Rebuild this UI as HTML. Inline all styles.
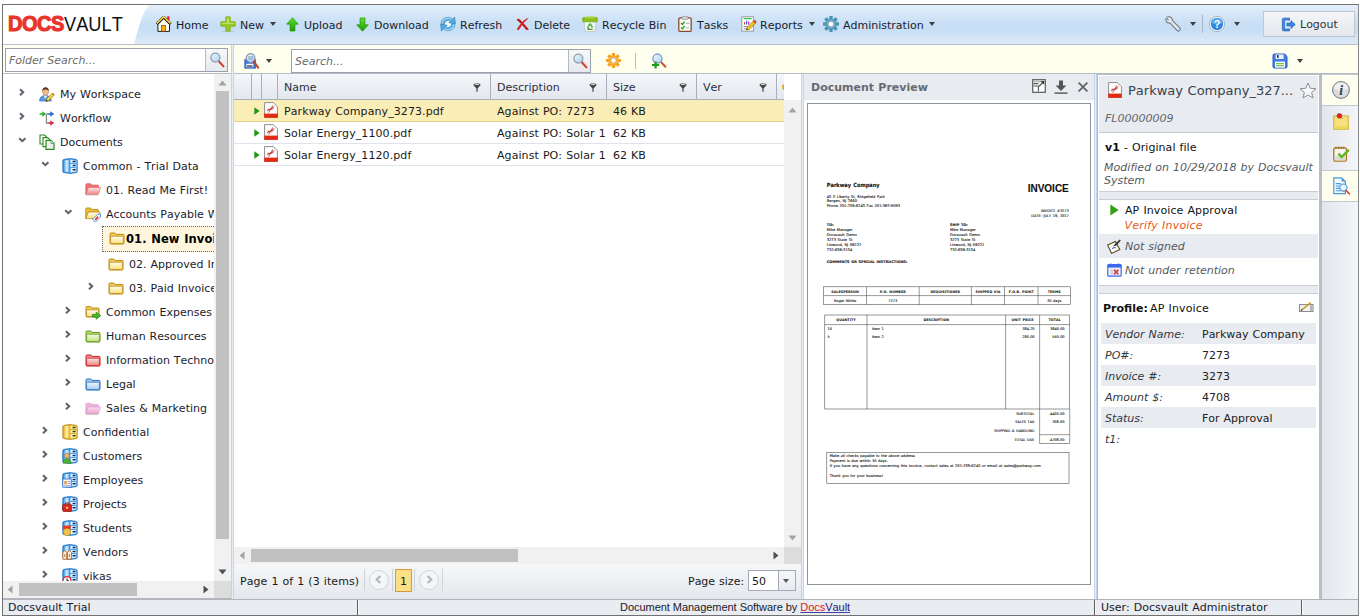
<!DOCTYPE html>
<html lang="en">
<head>
<meta charset="utf-8">
<title>Docsvault</title>
<style>
*{box-sizing:border-box;margin:0;padding:0}
html,body{width:1360px;height:616px;overflow:hidden;background:#fff}
body{font-family:"DejaVu Sans","Liberation Sans",sans-serif;font-size:11px;color:#1a1a1a;position:relative;word-spacing:0.45px;font-kerning:none}
.abs{position:absolute}
.t{position:absolute;white-space:nowrap;line-height:14px;height:14px;margin-top:1px}
svg{position:absolute;overflow:visible}
i,.it{font-style:italic}
#frame{position:absolute;left:2px;top:4px;width:1357px;height:612px;border:1px solid #707070;border-right-color:#8a8a8a}
/* toolbar */
#tb{position:absolute;left:3px;top:5px;width:1355px;height:39px;background:#fff;overflow:hidden}
#tbblue{position:absolute;left:0;top:0;width:1355px;height:39px}
#tbline{position:absolute;left:3px;top:44px;width:1355px;height:1px;background:#b9bec7}
.tbt{position:absolute;top:19px;line-height:14px;white-space:nowrap;color:#1c1c2c;font-size:11px}
.dd{position:absolute;width:0;height:0;margin-left:-0.2px;border-left:3.95px solid transparent;border-right:3.95px solid transparent;border-top:4.4px solid #404040}
/* search row */
#sr{position:absolute;left:3px;top:45px;width:1355px;height:29px;background:#fffff0;border-bottom:1px solid #b6bbc4}
.inp{position:absolute;background:#fff;border:1px solid #9aa1ac;height:24px}
.inp .ph{position:absolute;left:3px;top:5px;font-style:italic;color:#6b6b6b;line-height:14px;font-size:11px}
.inp .btn{position:absolute;right:0;top:0;width:22px;height:22px;border-left:1px solid #b4bac4;background:linear-gradient(#f7f8fa,#e6e9ee)}
/* tree */
#tree{position:absolute;left:3px;top:75px;width:211px;height:506px;background:#fff;overflow:hidden}
.tr{position:absolute;left:0;height:24px;line-height:24px;white-space:nowrap;font-size:11px;color:#1c1c2c}
.ex{position:absolute;width:7px;height:9px}
.gc{color:#2a2f3a}
.sb{font-size:11px;color:#1a1a2a}
.sbc{font-family:"Liberation Sans",sans-serif;letter-spacing:-0.04px;word-spacing:0}
</style>
</head>
<body>
<div id="frame"></div>

<!-- ===== top toolbar ===== -->
<div id="tb">
<svg id="tbblue" width="1355" height="39" viewBox="0 0 1355 39">
<defs><linearGradient id="gb" x1="0" y1="0" x2="0" y2="1"><stop offset="0" stop-color="#e4effb"/><stop offset="0.45" stop-color="#c9e0f6"/><stop offset="0.62" stop-color="#c6def5"/><stop offset="1" stop-color="#dceaf8"/></linearGradient></defs>
<path d="M131 39 C136 22 139 8 146 0 L1355 0 L1355 39 Z" fill="url(#gb)"/>
</svg>
</div>
<div id="tbline"></div>

<!-- logo -->
<div class="abs" style="left:8px;top:10px;height:28px;line-height:28px;white-space:nowrap;font-family:'Liberation Sans',sans-serif">
<span id="lg1" style="font-weight:bold;color:#e8342a;font-size:21.5px;letter-spacing:-0.5px;-webkit-text-stroke:1.1px #e8342a;display:inline-block;transform:scaleX(0.93);transform-origin:0 50%">DOCS</span></div>
<div class="abs" style="left:64px;top:10px;height:28px;line-height:28px;white-space:nowrap;font-family:'Liberation Sans',sans-serif">
<span id="lg2" style="color:#111;font-size:20.5px;display:inline-block;transform:scaleX(0.89);transform-origin:0 50%">VAULT</span></div>

<!-- toolbar labels -->
<span class="tbt" style="left:176px">Home</span>
<span class="tbt" style="left:240px">New</span><i class="dd" style="left:270px;top:22px"></i>
<span class="tbt" style="left:304px">Upload</span>
<span class="tbt" style="left:374px">Download</span>
<span class="tbt" style="left:460px">Refresh</span>
<span class="tbt" style="left:534px">Delete</span>
<span class="tbt" style="left:602px">Recycle Bin</span>
<span class="tbt" style="left:697px">Tasks</span>
<span class="tbt" style="left:760px">Reports</span><i class="dd" style="left:808.6px;top:22px;margin-left:0.6px"></i>
<span class="tbt" style="left:843px">Administration</span><i class="dd" style="left:929px;top:22px;margin-left:0.4px"></i>
<i class="dd" style="left:1190px;top:22px"></i>
<div class="abs" style="left:1202px;top:15px;width:1px;height:18px;background:#aab6c6"></div>
<i class="dd" style="left:1234px;top:22px"></i>
<div class="abs" style="left:1263px;top:11px;width:92px;height:26px;border:1px solid #c2c6cd;background:linear-gradient(#f4f6f9,#e3e7ed)"></div>
<span class="tbt" style="left:1300px;top:18px;color:#333">Logout</span>

<!-- ===== search row ===== -->
<div id="sr"></div>
<div class="inp" style="left:5px;top:48px;width:223px"><span class="ph">Folder Search...</span><span class="btn"></span></div>
<div class="inp" style="left:291px;top:49px;width:300px"><span class="ph">Search...</span><span class="btn"></span></div>
<i class="dd" style="left:266px;top:59px"></i>
<div class="abs" style="left:635px;top:53px;width:1px;height:16px;background:#b8bcc4"></div>
<i class="dd" style="left:1297px;top:59px"></i>

<!-- toolbar icons -->
<svg style="left:156px;top:16px;" width="16" height="16"><use href="#home"/></svg>
<svg style="left:220px;top:16px;" width="16" height="16"><use href="#plus"/></svg>
<svg style="left:285.5px;top:16.5px;" width="13" height="15"><use href="#upa"/></svg>
<svg style="left:355.5px;top:16.5px;" width="13" height="15"><use href="#dna"/></svg>
<svg style="left:440px;top:16px;" width="16" height="16"><use href="#refresh"/></svg>
<svg style="left:516px;top:17.5px;" width="13.5" height="12.5"><use href="#delx"/></svg>
<svg style="left:582px;top:16px;" width="16" height="16"><use href="#bin"/></svg>
<svg style="left:678px;top:16px;" width="14" height="16"><use href="#tasks"/></svg>
<svg style="left:741px;top:16px;" width="16" height="16"><use href="#reports"/></svg>
<svg style="left:823px;top:16px;fill:#4a94b6" width="16" height="16"><use href="#gear"/></svg>
<svg style="left:1165px;top:16px;" width="16" height="16"><use href="#wrench"/></svg>
<svg style="left:1209px;top:16px;" width="16" height="16"><use href="#help"/></svg>
<svg style="left:1280.5px;top:16.5px;" width="15" height="15"><use href="#logout"/></svg>
<svg style="left:209px;top:52px;" width="16" height="16"><use href="#mag"/></svg>
<svg style="left:572px;top:53px;" width="16" height="16"><use href="#mag"/></svg>
<svg style="left:244px;top:53px;" width="16" height="16"><use href="#magsave"/></svg>
<svg style="left:606px;top:53px;fill:#f5a31c" width="15" height="15"><use href="#gear"/></svg>
<svg style="left:651px;top:53px;" width="16" height="16"><use href="#magplus"/></svg>
<svg style="left:1272px;top:53px;" width="16" height="16"><use href="#floppy"/></svg>
<div id="tree">
<svg class="ex" style="left:15.5px;top:12.9px" width="8" height="9"><path d="M1 1.2 L4.2 4.2 L1 7.2" fill="none" stroke="#5b626c" stroke-width="2"/></svg>
<svg class="ic" style="left:36px;top:11px" width="16" height="16"><use href="#ws"/></svg>
<div class="tr" style="left:57px;top:8px">My Workspace</div>
<svg class="ex" style="left:15.5px;top:36.9px" width="8" height="9"><path d="M1 1.2 L4.2 4.2 L1 7.2" fill="none" stroke="#5b626c" stroke-width="2"/></svg>
<svg class="ic" style="left:36px;top:35px" width="16" height="16"><use href="#wf"/></svg>
<div class="tr" style="left:57px;top:32px">Workflow</div>
<svg class="ex" style="left:15.5px;top:60.9px" width="8" height="9"><path d="M0.2 2.2 L3.3 5.2 L6.4 2.2" fill="none" stroke="#5b626c" stroke-width="2"/></svg>
<svg class="ic" style="left:36px;top:59px" width="16" height="16"><use href="#docs"/></svg>
<div class="tr" style="left:57px;top:56px">Documents</div>
<svg class="ex" style="left:38.5px;top:84.9px" width="8" height="9"><path d="M0.2 2.2 L3.3 5.2 L6.4 2.2" fill="none" stroke="#5b626c" stroke-width="2"/></svg>
<svg class="ic" style="left:59px;top:83px" width="16" height="16"><use href="#cab"/></svg>
<div class="tr" style="left:80px;top:80px">Common - Trial Data</div>
<svg class="ic" style="left:82px;top:107px" width="16" height="16"><use href="#f_red_open" y="-0.5"/></svg>
<div class="tr" style="left:103px;top:104px">01. Read Me First!</div>
<svg class="ex" style="left:61.5px;top:132.9px" width="8" height="9"><path d="M0.2 2.2 L3.3 5.2 L6.4 2.2" fill="none" stroke="#5b626c" stroke-width="2"/></svg>
<svg class="ic" style="left:82px;top:131px" width="16" height="16"><use href="#f_tag"/></svg>
<div class="tr" style="left:103px;top:128px">Accounts Payable Workflow</div>
<div class="abs" style="left:99px;top:151px;width:140px;height:26px;border:1px dotted #6a6a6a;background:#fdf6dd"></div>
<svg class="ic" style="left:106px;top:155px" width="16" height="16"><use href="#f_yel"/></svg>
<div class="tr" style="left:123px;top:152px;font-weight:bold;font-size:11.5px;letter-spacing:0.1px;color:#000">01. New Invoices</div>
<svg class="ic" style="left:105px;top:181px" width="16" height="16"><use href="#f_yel"/></svg>
<div class="tr" style="left:126px;top:178px">02. Approved Invoices</div>
<svg class="ex" style="left:84.5px;top:206.9px" width="8" height="9"><path d="M1 1.2 L4.2 4.2 L1 7.2" fill="none" stroke="#5b626c" stroke-width="2"/></svg>
<svg class="ic" style="left:105px;top:205px" width="16" height="16"><use href="#f_yel"/></svg>
<div class="tr" style="left:126px;top:202px">03. Paid Invoices</div>
<svg class="ex" style="left:61.5px;top:230.9px" width="8" height="9"><path d="M1 1.2 L4.2 4.2 L1 7.2" fill="none" stroke="#5b626c" stroke-width="2"/></svg>
<svg class="ic" style="left:82px;top:229px" width="16" height="16"><use href="#f_arrow"/></svg>
<div class="tr" style="left:103px;top:226px">Common Expenses</div>
<svg class="ex" style="left:61.5px;top:254.9px" width="8" height="9"><path d="M1 1.2 L4.2 4.2 L1 7.2" fill="none" stroke="#5b626c" stroke-width="2"/></svg>
<svg class="ic" style="left:82px;top:253px" width="16" height="16"><use href="#f_green"/></svg>
<div class="tr" style="left:103px;top:250px">Human Resources</div>
<svg class="ex" style="left:61.5px;top:278.9px" width="8" height="9"><path d="M1 1.2 L4.2 4.2 L1 7.2" fill="none" stroke="#5b626c" stroke-width="2"/></svg>
<svg class="ic" style="left:82px;top:277px" width="16" height="16"><use href="#f_red"/></svg>
<div class="tr" style="left:103px;top:274px">Information Technology</div>
<svg class="ex" style="left:61.5px;top:302.9px" width="8" height="9"><path d="M1 1.2 L4.2 4.2 L1 7.2" fill="none" stroke="#5b626c" stroke-width="2"/></svg>
<svg class="ic" style="left:82px;top:301px" width="16" height="16"><use href="#f_blue"/></svg>
<div class="tr" style="left:103px;top:298px">Legal</div>
<svg class="ex" style="left:61.5px;top:326.9px" width="8" height="9"><path d="M1 1.2 L4.2 4.2 L1 7.2" fill="none" stroke="#5b626c" stroke-width="2"/></svg>
<svg class="ic" style="left:82px;top:325px" width="16" height="16"><use href="#f_pink"/></svg>
<div class="tr" style="left:103px;top:322px">Sales &amp; Marketing</div>
<svg class="ex" style="left:38.5px;top:350.9px" width="8" height="9"><path d="M1 1.2 L4.2 4.2 L1 7.2" fill="none" stroke="#5b626c" stroke-width="2"/></svg>
<svg class="ic" style="left:59px;top:349px" width="16" height="16"><use href="#cab_y"/></svg>
<div class="tr" style="left:80px;top:346px">Confidential</div>
<svg class="ex" style="left:38.5px;top:374.9px" width="8" height="9"><path d="M1 1.2 L4.2 4.2 L1 7.2" fill="none" stroke="#5b626c" stroke-width="2"/></svg>
<svg class="ic" style="left:59px;top:373px" width="16" height="16"><use href="#cab_cust"/></svg>
<div class="tr" style="left:80px;top:370px">Customers</div>
<svg class="ex" style="left:38.5px;top:398.9px" width="8" height="9"><path d="M1 1.2 L4.2 4.2 L1 7.2" fill="none" stroke="#5b626c" stroke-width="2"/></svg>
<svg class="ic" style="left:59px;top:397px" width="16" height="16"><use href="#cab_emp"/></svg>
<div class="tr" style="left:80px;top:394px">Employees</div>
<svg class="ex" style="left:38.5px;top:422.9px" width="8" height="9"><path d="M1 1.2 L4.2 4.2 L1 7.2" fill="none" stroke="#5b626c" stroke-width="2"/></svg>
<svg class="ic" style="left:59px;top:421px" width="16" height="16"><use href="#cab_proj"/></svg>
<div class="tr" style="left:80px;top:418px">Projects</div>
<svg class="ex" style="left:38.5px;top:446.9px" width="8" height="9"><path d="M1 1.2 L4.2 4.2 L1 7.2" fill="none" stroke="#5b626c" stroke-width="2"/></svg>
<svg class="ic" style="left:59px;top:445px" width="16" height="16"><use href="#cab_stu"/></svg>
<div class="tr" style="left:80px;top:442px">Students</div>
<svg class="ex" style="left:38.5px;top:470.9px" width="8" height="9"><path d="M1 1.2 L4.2 4.2 L1 7.2" fill="none" stroke="#5b626c" stroke-width="2"/></svg>
<svg class="ic" style="left:59px;top:469px" width="16" height="16"><use href="#cab_ven"/></svg>
<div class="tr" style="left:80px;top:466px">Vendors</div>
<svg class="ex" style="left:38.5px;top:494.9px" width="8" height="9"><path d="M1 1.2 L4.2 4.2 L1 7.2" fill="none" stroke="#5b626c" stroke-width="2"/></svg>
<svg class="ic" style="left:59px;top:493px" width="16" height="16"><use href="#cab_vik"/></svg>
<div class="tr" style="left:80px;top:490px">vikas</div>
</div>
<div class="abs" style="left:214px;top:74px;width:17px;height:507px;background:#f1f1f1"></div>
<div class="abs" style="left:216px;top:91px;width:13px;height:448px;background:#c1c1c1"></div>
<svg style="left:218px;top:80px" width="9" height="6"><path d="M0.5 5.5 L4.5 0.5 L8.5 5.5 Z" fill="#a3a3a3"/></svg>
<svg style="left:218px;top:569px" width="9" height="6"><path d="M0.5 0.5 L4.5 5.5 L8.5 0.5 Z" fill="#505050"/></svg>
<div class="abs" style="left:3px;top:581px;width:228px;height:17px;background:#f1f1f1"></div>
<div class="abs" style="left:214px;top:581px;width:17px;height:17px;background:#dcdcdc"></div>
<div class="abs" style="left:19px;top:583px;width:118px;height:13px;background:#c1c1c1"></div>
<svg style="left:7px;top:585px" width="6" height="9"><path d="M5.5 0.5 L0.5 4.5 L5.5 8.5 Z" fill="#a3a3a3"/></svg>
<svg style="left:203px;top:585px" width="6" height="9"><path d="M0.5 0.5 L5.5 4.5 L0.5 8.5 Z" fill="#505050"/></svg>
<div class="abs" style="left:231px;top:45px;width:3px;height:554px;background:#e6eef8;border-left:1px solid #c3d3ea;border-right:1px solid #c3d3ea"></div>
<!--TREE-END-->
<!-- ===== grid ===== -->
<div class="abs" style="left:234px;top:74px;width:567px;height:525px;background:#fff"></div>
<div id="gh" class="abs" style="left:234px;top:74px;width:550px;height:26px;background:linear-gradient(#f4f6f9,#e3e7ee);border-bottom:1px solid #a9afb9;overflow:hidden">
<div class="abs" style="left:17px;top:0;width:1px;height:25px;background:#a9afb9"></div>
<div class="abs" style="left:27px;top:0;width:1px;height:25px;background:#a9afb9"></div>
<div class="abs" style="left:43px;top:0;width:1px;height:25px;background:#a9afb9"></div>
<div class="abs" style="left:256px;top:0;width:1px;height:25px;background:#a9afb9"></div>
<div class="abs" style="left:372px;top:0;width:1px;height:25px;background:#a9afb9"></div>
<div class="abs" style="left:462px;top:0;width:1px;height:25px;background:#a9afb9"></div>
<div class="abs" style="left:542px;top:0;width:1px;height:25px;background:#a9afb9"></div>
<span class="t gc" style="left:50px;top:6px">Name</span>
<span class="t gc" style="left:263px;top:6px">Description</span>
<span class="t gc" style="left:379px;top:6px">Size</span>
<span class="t gc" style="left:469px;top:6px">Ver</span>
<svg style="left:239px;top:9px" width="8" height="9"><use href="#filt"/></svg>
<svg style="left:355px;top:9px" width="8" height="9"><use href="#filt"/></svg>
<svg style="left:445px;top:9px" width="8" height="9"><use href="#filt"/></svg>
<svg style="left:525px;top:9px" width="8" height="9"><use href="#filt"/></svg>
<div class="abs" style="left:548px;top:10px;width:3px;height:6px;background:#f0a020;border-radius:3px 0 0 3px"></div>
</div>
<div class="abs" style="left:234px;top:100px;width:550px;height:22px;background:#fbedb6;border-bottom:1px solid #e6cf86"></div>
<div class="abs" style="left:234px;top:122px;width:550px;height:22px;border-bottom:1px solid #dfe3ea"></div>
<div class="abs" style="left:234px;top:144px;width:550px;height:22px;border-bottom:1px solid #dfe3ea"></div>
<svg style="left:254px;top:107px" width="6" height="8"><use href="#play"/></svg>
<svg style="left:264px;top:102px" width="14" height="16"><use href="#pdf"/></svg>
<span class="t" style="left:284px;top:104px;letter-spacing:0.09px">Parkway Company_3273.pdf</span>
<span class="t" style="left:497px;top:104px;width:110px;overflow:hidden;letter-spacing:0.08px">Against PO: 7273</span>
<span class="t" style="left:613px;top:104px">46 KB</span>
<svg style="left:254px;top:129px" width="6" height="8"><use href="#play"/></svg>
<svg style="left:264px;top:124px" width="14" height="16"><use href="#pdf"/></svg>
<span class="t" style="left:284px;top:126px;letter-spacing:0.09px">Solar Energy_1100.pdf</span>
<span class="t" style="left:497px;top:126px;width:110px;overflow:hidden;letter-spacing:0.08px">Against PO: Solar 1</span>
<span class="t" style="left:613px;top:126px">62 KB</span>
<svg style="left:254px;top:151px" width="6" height="8"><use href="#play"/></svg>
<svg style="left:264px;top:146px" width="14" height="16"><use href="#pdf"/></svg>
<span class="t" style="left:284px;top:148px;letter-spacing:0.09px">Solar Energy_1120.pdf</span>
<span class="t" style="left:497px;top:148px;width:110px;overflow:hidden;letter-spacing:0.08px">Against PO: Solar 1</span>
<span class="t" style="left:613px;top:148px">62 KB</span>
<div class="abs" style="left:784px;top:100px;width:17px;height:447px;background:#f1f1f1"></div>
<svg style="left:788px;top:107px" width="9" height="6"><path d="M0.5 5.5 L4.5 0.5 L8.5 5.5 Z" fill="#a3a3a3"/></svg>
<svg style="left:788px;top:535px" width="9" height="6"><path d="M0.5 0.5 L4.5 5.5 L8.5 0.5 Z" fill="#a3a3a3"/></svg>
<div class="abs" style="left:234px;top:547px;width:567px;height:17px;background:#f1f1f1"></div>
<div class="abs" style="left:784px;top:547px;width:17px;height:17px;background:#dcdcdc"></div>
<div class="abs" style="left:251px;top:549px;width:267px;height:13px;background:#c1c1c1"></div>
<svg style="left:239px;top:551px" width="6" height="9"><path d="M5.5 0.5 L0.5 4.5 L5.5 8.5 Z" fill="#a3a3a3"/></svg>
<svg style="left:773px;top:551px" width="6" height="9"><path d="M0.5 0.5 L5.5 4.5 L0.5 8.5 Z" fill="#505050"/></svg>
<div class="abs" style="left:234px;top:564px;width:567px;height:35px;background:linear-gradient(#f6f7f9,#e4e7ec)"></div>
<span class="t" style="left:240px;top:574px;letter-spacing:0.07px">Page 1 of 1 (3 items)</span>
<div class="abs" style="left:364px;top:569px;width:1px;height:22px;background:#cfd3d9"></div>
<div class="abs" style="left:392px;top:569px;width:1px;height:22px;background:#cfd3d9"></div>
<div class="abs" style="left:414px;top:569px;width:1px;height:22px;background:#cfd3d9"></div>
<div class="abs" style="left:442px;top:569px;width:1px;height:22px;background:#cfd3d9"></div>
<div class="abs" style="left:369px;top:570px;width:20px;height:20px;border:1px solid #d2d5da;border-radius:10px;background:#f4f5f7"></div>
<svg style="left:375px;top:575px" width="7" height="9"><path d="M5.4 1 L1.6 4.5 L5.4 8" fill="none" stroke="#b0b3b8" stroke-width="2"/></svg>
<div class="abs" style="left:419px;top:570px;width:20px;height:20px;border:1px solid #d2d5da;border-radius:10px;background:#f4f5f7"></div>
<svg style="left:426px;top:575px" width="7" height="9"><path d="M1.6 1 L5.4 4.5 L1.6 8" fill="none" stroke="#b0b3b8" stroke-width="2"/></svg>
<div class="abs" style="left:395px;top:569px;width:17px;height:23px;border:1px solid #d89a3c;background:#fbdf85"></div>
<span class="t" style="left:400px;top:574px">1</span>
<span class="t" style="left:688px;top:574px">Page size:</span>
<div class="abs" style="left:748px;top:570px;width:48px;height:21px;border:1px solid #a4aab4;background:#fff"></div>
<div class="abs" style="left:778px;top:571px;width:17px;height:19px;border-left:1px solid #a4aab4;background:linear-gradient(#f6f7f9,#e8ebef)"></div>
<i class="dd" style="left:783px;top:579px;border-top-color:#555"></i>
<span class="t" style="left:752px;top:574px">50</span>
<div class="abs" style="left:801px;top:74px;width:3px;height:525px;background:#e6eef8;border-left:1px solid #c3d3ea;border-right:1px solid #c3d3ea"></div>
<!--GRID-END-->
<!-- ===== preview ===== -->
<div class="abs" style="left:804px;top:74px;width:290px;height:525px;background:#fff"></div>
<div class="abs" style="left:804px;top:74px;width:290px;height:26px;background:#e8ebf0"></div>
<span class="t" style="left:811px;top:80px;font-weight:bold;color:#666a70">Document Preview</span>
<svg style="left:1032px;top:79px" width="14" height="14"><use href="#popout"/></svg>
<svg style="left:1054px;top:80px" width="14" height="14"><use href="#dl"/></svg>
<svg style="left:1078px;top:82px" width="10" height="10"><use href="#cls"/></svg>
<div class="abs" style="left:807px;top:103px;width:284px;height:482px;border:1px solid #8d929b;background:#fff"></div>
<svg id="inv" style="left:807px;top:103px" width="284" height="482" viewBox="807 103 284 482" font-family="DejaVu Sans, Liberation Sans, sans-serif" fill="#222">
<g font-size="3.6" stroke="#222" stroke-width="0.12">
<text x="826.8" y="187" font-size="5.6" font-weight="bold" fill="#111" font-family="DejaVu Sans Condensed, DejaVu Sans, sans-serif">Parkway Company</text>
<text x="1068.8" y="191.6" font-size="10" font-weight="bold" text-anchor="end" fill="#111" font-family="Liberation Sans, sans-serif">INVOICE</text>
<text x="826.8" y="197.6">45 E Liberty St, Ridgefield Park</text>
<text x="826.8" y="202.4">Bergen, NJ 7660</text>
<text x="826.8" y="207.4">Phone 201-709-6245  Fax 201-387-9093</text>
<text x="1068.8" y="212" text-anchor="end" font-size="3.5">INVOICE #3273</text>
<text x="1068.8" y="217" text-anchor="end" font-size="3.5">DATE: JULY 19, 2017</text>
<text x="826.8" y="226.3" font-weight="bold" font-size="3.5">TO:</text>
<text x="826.8" y="231.3">Mike Manager</text>
<text x="826.8" y="236">Docsvault Demo</text>
<text x="826.8" y="241">3273 State St</text>
<text x="826.8" y="245.7">Linwood, NJ 08221</text>
<text x="826.8" y="250.6">732-658-3154</text>
<text x="949.9" y="226.3" font-weight="bold" font-size="3.5">SHIP TO:</text>
<text x="949.9" y="231.3">Mike Manager</text>
<text x="949.9" y="236">Docsvault Demo</text>
<text x="949.9" y="241">3273 State St</text>
<text x="949.9" y="245.7">Linwood, NJ 08221</text>
<text x="949.9" y="250.6">732-658-3154</text>
<text x="826.8" y="263.3" font-weight="bold" font-size="3.5">COMMENTS OR SPECIAL INSTRUCTIONS:</text>
</g>
<g fill="none" stroke="#444" stroke-width="0.55">
<rect x="823.5" y="286.8" width="247" height="17.9"/>
<path d="M823.5 295.6 H1070.5 M866.5 286.8 V304.7 M919.2 286.8 V304.7 M971.4 286.8 V304.7 M1004.5 286.8 V304.7 M1038 286.8 V304.7"/>
<rect x="824.8" y="315" width="244.9" height="94"/>
<path d="M824.8 324.6 H1069.7 M867 315 V409 M1005.6 315 V409 M1039.6 315 V443.5 M1069.7 409 V443.5 M1039.6 434.7 H1069.7 M1039.6 443.5 H1069.7"/>
<rect x="826.8" y="452.4" width="242.2" height="31"/>
</g>
<g font-size="3.4" font-weight="bold" text-anchor="middle" fill="#111">
<text x="845" y="292.6">SALESPERSON</text><text x="892.8" y="292.6">P.O. NUMBER</text><text x="945.3" y="292.6">REQUISITIONER</text><text x="988" y="292.6">SHIPPED VIA</text><text x="1021.2" y="292.6">F.O.B. POINT</text><text x="1054.2" y="292.6">TERMS</text>
<text x="846" y="321.2">QUANTITY</text><text x="936.3" y="321.2">DESCRIPTION</text><text x="1022.6" y="321.2">UNIT PRICE</text><text x="1054.6" y="321.2">TOTAL</text>
</g>
<g font-size="3.5" stroke="#222" stroke-width="0.12">
<text x="845" y="301.6" text-anchor="middle">Roger White</text><text x="892.8" y="301.6" text-anchor="middle">7273</text><text x="1054.2" y="301.6" text-anchor="middle">30 days</text>
<text x="827.6" y="329.6">10</text><text x="872" y="329.6">Item 1</text><text x="1034.6" y="329.6" text-anchor="end">384.20</text><text x="1064.6" y="329.6" text-anchor="end">3840.00</text>
<text x="827.6" y="337.8">5</text><text x="872" y="337.8">Item 2</text><text x="1034.6" y="337.8" text-anchor="end">280.00</text><text x="1064.6" y="337.8" text-anchor="end">560.00</text>
<text x="1034.4" y="414.8" text-anchor="end" font-size="3.45">SUBTOTAL</text><text x="1064.4" y="414.8" text-anchor="end">4400.00</text>
<text x="1034.4" y="423.2" text-anchor="end" font-size="3.45">SALES TAX</text><text x="1064.4" y="423.2" text-anchor="end">308.00</text>
<text x="1034.4" y="431.9" text-anchor="end" font-size="3.45">SHIPPING &amp; HANDLING</text>
<text x="1034.4" y="440.7" text-anchor="end" font-size="3.45">TOTAL DUE</text><text x="1064.4" y="440.7" text-anchor="end">4708.00</text>
<text x="829.7" y="456.7" font-size="3.56">Make all checks payable to the above address</text>
<text x="829.7" y="461.6" font-size="3.56">Payment is due within 30 days.</text>
<text x="829.7" y="466.7" font-size="3.59">If you have any questions concerning this invoice, contact sales at 201-709-6245 or email at sales@parkway.com</text>
<text x="829.7" y="477.1" font-size="3.56">Thank you for your business!</text>
</g>
</svg>
<div class="abs" style="left:1094px;top:74px;width:3px;height:525px;background:#e6eef8;border-left:1px solid #c3d3ea;border-right:1px solid #c3d3ea"></div>
<!--PREVIEW-END-->
<!-- ===== right panel ===== -->
<div class="abs" style="left:1097px;top:74px;width:223px;height:525px;background:#fff;border-left:1px solid #b4b9c2;border-top:1px solid #b4b9c2"></div>
<div class="abs" style="left:1099px;top:76px;width:219px;height:57px;background:#e8ebf0;border-bottom:1px solid #c6cad1"></div>
<svg style="left:1108px;top:82px" width="14" height="16"><use href="#pdf"/></svg>
<span class="t" id="ttl" style="left:1128px;top:80px;font-size:13px;line-height:20px;height:20px;color:#35424f">Parkway Company_327...</span>
<svg style="left:1299px;top:81.5px" width="18" height="17"><use href="#star"/></svg>
<span class="t it" style="left:1105px;top:111px;color:#63676e">FL00000009</span>
<span class="t" style="left:1105px;top:140px;color:#111;letter-spacing:0.06px"><b>v1</b> - Original file</span>
<span class="t it" style="left:1104px;top:160px;color:#555a62;font-size:11px;letter-spacing:0.03px">Modified on 10/29/2018 by Docsvault</span>
<span class="t it" style="left:1104px;top:173px;color:#555a62;font-size:11px">System</span>
<div class="abs" style="left:1099px;top:191px;width:219px;height:9px;background:#e8ebf0;border-top:1px solid #c9cdd3;border-bottom:1px solid #c9cdd3"></div>
<svg style="left:1110px;top:204px" width="9" height="12" viewBox="0 0 9 12"><path d="M0.4 0.4 L8.6 6 L0.4 11.6 Z" fill="#2fa012"/></svg>
<span class="t" style="left:1125px;top:203px;color:#111;letter-spacing:0.1px">AP Invoice Approval</span>
<span class="t it" style="left:1124.5px;top:218px;color:#e8581a;letter-spacing:0.2px">Verify Invoice</span>
<div class="abs" style="left:1099px;top:234px;width:219px;height:24px;background:#e8ebf0"></div>
<svg style="left:1107px;top:239px" width="15" height="15"><use href="#sign"/></svg>
<span class="t it" style="left:1125px;top:239px;color:#555a62">Not signed</span>
<svg style="left:1107px;top:263px" width="15" height="14"><use href="#cal"/></svg>
<span class="t it" style="left:1125px;top:263px;color:#555a62">Not under retention</span>
<div class="abs" style="left:1099px;top:285px;width:219px;height:9px;background:#e8ebf0;border-top:1px solid #c9cdd3;border-bottom:1px solid #c9cdd3"></div>
<span class="t" style="left:1103px;top:301px;color:#111"><b>Profile:</b></span><span class="t" style="left:1150px;top:301px;color:#111;letter-spacing:0.15px">AP Invoice</span>
<svg style="left:1299px;top:302px" width="15" height="10"><use href="#edit"/></svg>
<div class="abs" style="left:1101px;top:323px;width:215px;height:21px;background:#e8ebf0"></div>
<span class="t it" style="left:1105px;top:327px;color:#333840">Vendor Name:</span><span class="t" style="left:1202px;top:327px;color:#222">Parkway Company</span>
<span class="t it" style="left:1105px;top:348px;color:#333840">PO#:</span><span class="t" style="left:1202px;top:348px;color:#222">7273</span>
<div class="abs" style="left:1101px;top:365px;width:215px;height:21px;background:#e8ebf0"></div>
<span class="t it" style="left:1105px;top:369px;color:#333840">Invoice #:</span><span class="t" style="left:1202px;top:369px;color:#222">3273</span>
<span class="t it" style="left:1105px;top:390px;color:#333840">Amount $:</span><span class="t" style="left:1202px;top:390px;color:#222">4708</span>
<div class="abs" style="left:1101px;top:407px;width:215px;height:21px;background:#e8ebf0"></div>
<span class="t it" style="left:1105px;top:411px;color:#333840">Status:</span><span class="t" style="left:1202px;top:411px;color:#222">For Approval</span>
<span class="t it" style="left:1105px;top:432px;color:#333840">t1:</span><span class="t" style="left:1202px;top:432px;color:#222"></span>
<!-- tab strip -->
<div class="abs" style="left:1319px;top:74px;width:3px;height:525px;background:#b9bdc5"></div>
<div class="abs" style="left:1322px;top:74px;width:36px;height:525px;background:linear-gradient(90deg,#e3e6ec,#f3f5f8);border-top:1px solid #c3c8d0"></div>
<div class="abs" style="left:1322px;top:75px;width:36px;height:31px;background:#fffff0;border-bottom:1px solid #c3c8d0"></div>
<div class="abs" style="left:1322px;top:170px;width:36px;height:32px;background:#fffff0;border-top:1px solid #c3c8d0;border-bottom:1px solid #c3c8d0"></div>
<svg style="left:1332px;top:81px" width="18" height="18"><use href="#info"/></svg>
<svg style="left:1333px;top:113px" width="16" height="17"><use href="#sticky"/></svg>
<svg style="left:1333px;top:146px" width="17" height="16"><use href="#tcheck"/></svg>
<svg style="left:1333px;top:177px" width="17" height="18"><use href="#docprev"/></svg>
<!--RIGHT-END-->
<!-- ===== status bar ===== -->
<div class="abs" style="left:3px;top:599px;width:1355px;height:16px;background:#e9ecf1;border-top:1px solid #b0b3b9"></div>
<div class="abs" style="left:3px;top:598px;width:228px;height:1px;background:#b4b7bd"></div>
<div class="abs" style="left:357px;top:600px;width:2px;height:15px;background:#f7f8fa;border-left:1px solid #5f5f5f"></div>
<div class="abs" style="left:1094px;top:600px;width:2px;height:15px;background:#f7f8fa;border-left:1px solid #5f5f5f"></div>
<div class="abs" style="left:1301px;top:600px;width:2px;height:15px;background:#f7f8fa;border-left:1px solid #5f5f5f"></div>
<span class="t sb" style="left:8px;top:600px">Docsvault Trial</span>
<span class="t sb sbc" style="left:620px;top:599px">Document Management Software by <span style="text-decoration:underline;text-decoration-color:#4a3aa0"><span style="color:#e02020">Docs</span><span style="color:#2a1a80">Vault</span></span></span>
<span class="t sb" style="left:1101px;top:600px">User: Docsvault Administrator</span>
<!--STATUS-END-->
<!--ICONS-START-->
<svg width="0" height="0" style="left:0;top:0">
<defs>
<linearGradient id="gY" x1="0" y1="0" x2="0" y2="1"><stop offset="0" stop-color="#fffdf0"/><stop offset="1" stop-color="#f9df7e"/></linearGradient>
<linearGradient id="gG" x1="0" y1="0" x2="0" y2="1"><stop offset="0" stop-color="#f6fbe6"/><stop offset="1" stop-color="#bfe07c"/></linearGradient>
<linearGradient id="gR" x1="0" y1="0" x2="0" y2="1"><stop offset="0" stop-color="#fde6e6"/><stop offset="1" stop-color="#f08080"/></linearGradient>
<linearGradient id="gBl" x1="0" y1="0" x2="0" y2="1"><stop offset="0" stop-color="#f2f8fe"/><stop offset="1" stop-color="#a6ccf2"/></linearGradient>
<linearGradient id="gP" x1="0" y1="0" x2="0" y2="1"><stop offset="0" stop-color="#f9dcee"/><stop offset="1" stop-color="#e9a3d0"/></linearGradient>
<linearGradient id="gCabL" x1="0" y1="0" x2="1" y2="0"><stop offset="0" stop-color="#3f9bea"/><stop offset="0.55" stop-color="#d6effe"/><stop offset="1" stop-color="#62b4f2"/></linearGradient>
<linearGradient id="gCabYL" x1="0" y1="0" x2="1" y2="0"><stop offset="0" stop-color="#eab42a"/><stop offset="0.55" stop-color="#fff3a8"/><stop offset="1" stop-color="#f0c43c"/></linearGradient>
<linearGradient id="gCab" x1="0" y1="0" x2="1" y2="0"><stop offset="0" stop-color="#2f8fe0"/><stop offset="0.5" stop-color="#bfe3fb"/><stop offset="1" stop-color="#3a98e4"/></linearGradient>
<linearGradient id="gCabY" x1="0" y1="0" x2="1" y2="0"><stop offset="0" stop-color="#e0a81a"/><stop offset="0.5" stop-color="#fde97c"/><stop offset="1" stop-color="#e4b022"/></linearGradient>
<linearGradient id="gGrn" x1="0" y1="0" x2="0" y2="1"><stop offset="0" stop-color="#5fe02a"/><stop offset="1" stop-color="#1f9a08"/></linearGradient>
<linearGradient id="gLens" x1="0" y1="0" x2="1" y2="1"><stop offset="0" stop-color="#f2f9ff"/><stop offset="1" stop-color="#a9cdee"/></linearGradient>

<!-- folders (16x16, drawn within y 2..14) -->
<symbol id="f_yel" viewBox="0 0 16 16"><path d="M1 4 Q1 3 2 3 H5.8 L7 4.4 H14 Q15 4.4 15 5.4 V13 Q15 14 14 14 H2 Q1 14 1 13 Z" fill="#f0cc5c" stroke="#bd8a14" stroke-width="1"/><rect x="1.6" y="6.2" width="12.8" height="7.4" rx="0.9" fill="url(#gY)" stroke="#bd8a14" stroke-width="0.8"/></symbol>
<symbol id="f_green" viewBox="0 0 16 16"><path d="M1 4 Q1 3 2 3 H5.8 L7 4.4 H14 Q15 4.4 15 5.4 V13 Q15 14 14 14 H2 Q1 14 1 13 Z" fill="#b4d870" stroke="#669a1e" stroke-width="1"/><rect x="1.6" y="6.2" width="12.8" height="7.4" rx="0.9" fill="url(#gG)" stroke="#669a1e" stroke-width="0.8"/></symbol>
<symbol id="f_red" viewBox="0 0 16 16"><path d="M1 4 Q1 3 2 3 H5.8 L7 4.4 H14 Q15 4.4 15 5.4 V13 Q15 14 14 14 H2 Q1 14 1 13 Z" fill="#f09090" stroke="#cc2424" stroke-width="1"/><rect x="1.6" y="6.2" width="12.8" height="7.4" rx="0.9" fill="url(#gR)" stroke="#cc2424" stroke-width="0.8"/></symbol>
<symbol id="f_blue" viewBox="0 0 16 16"><path d="M1 4 Q1 3 2 3 H5.8 L7 4.4 H14 Q15 4.4 15 5.4 V13 Q15 14 14 14 H2 Q1 14 1 13 Z" fill="#a8ccf0" stroke="#2c6ec4" stroke-width="1"/><rect x="1.6" y="6.2" width="12.8" height="7.4" rx="0.9" fill="url(#gBl)" stroke="#2c6ec4" stroke-width="0.8"/></symbol>
<symbol id="f_pink" viewBox="0 0 16 16"><path d="M0.8 4.4 Q0.8 3.2 2 3.2 H5.6 L6.8 4.6 H12.6 Q13.6 4.6 13.6 5.6 V7.2 H3.4 L0.8 13.6 Z" fill="#eeb4dc" stroke="#dc9ccc" stroke-width=".7"/><path d="M3.6 7 H15.8 L13.2 14 H0.8 Z" fill="url(#gP)" stroke="#de9ccc" stroke-width=".6"/><path d="M1 14.6 H13.2" stroke="#b8b8b8" stroke-width=".6"/></symbol>
<symbol id="f_red_open" viewBox="0 0 16 16"><path d="M0.8 3.4 Q0.8 2.2 2 2.2 H5.6 L6.8 3.6 H12.6 Q13.6 3.6 13.6 4.6 V6.2 H3.4 L0.8 12.6 Z" fill="#ee7272" stroke="#e05a5a" stroke-width=".7"/><path d="M3.6 6 H15.8 L13.2 13 H0.8 Z" fill="url(#gR)" stroke="#e46868" stroke-width=".6"/><path d="M1 13.6 H13.2" stroke="#b0b0b0" stroke-width=".6"/></symbol>
<symbol id="f_tag" viewBox="0 0 16 16"><path d="M0.8 3.2 Q0.8 2 2 2 H5.4 L6.6 3.4 H12.4 Q13.4 3.4 13.4 4.4 V6 H3.6 L0.8 12.6 Z" fill="#ecc040" stroke="#b8860e" stroke-width=".9"/><path d="M3.4 6 H15.2 L12.6 12.6 H0.8 Z" fill="url(#gY)" stroke="#c4921c" stroke-width=".8"/><path d="M7.6 13.4 L12.4 8.4 L15.6 8 L15.4 11.2 L10.6 16 Z" fill="#fff" stroke="#4a8ad8" stroke-width="0.9"/><path d="M9.6 13.2 L12.6 10 L13.8 11.2 L10.8 14.4 Z" fill="#e53030"/></symbol>
<symbol id="f_arrow" viewBox="0 0 16 16"><path d="M1 3.6 Q1 2.6 2 2.6 H5.8 L7 4 H13 Q14 4 14 5 V12 Q14 13 13 13 H2 Q1 13 1 12 Z" fill="#f0cc5c" stroke="#bd8a14" stroke-width="1"/><rect x="1.6" y="5.8" width="11.8" height="6.8" rx="0.9" fill="url(#gY)" stroke="#bd8a14" stroke-width="0.8"/><path d="M7.4 10.4 H11.2 V8.2 L15.8 11.7 L11.2 15.2 V13 H7.4 Z" fill="#44b82e" stroke="#1e7f12" stroke-width="0.7"/></symbol>

<!-- cabinets -->
<symbol id="cab" viewBox="0 0 16 16"><path d="M0.8 2.6 Q0.8 1.6 1.8 1.4 L7.6 0.6 H8.4 L14.2 1.4 Q15.2 1.6 15.2 2.6 V13.4 Q15.2 14.4 14.2 14.6 L8.4 15.4 H7.6 L1.8 14.6 Q0.8 14.4 0.8 13.4 Z" fill="#2b86dc" stroke="#1f72c8" stroke-width=".8"/><path d="M1.6 2.6 L7.4 1.6 V14.4 L1.6 13.4 Z" fill="url(#gCabL)"/><path d="M8.4 1.6 L14.4 2.6 V13.4 L8.4 14.4 Z" fill="#eaf6fe"/><path d="M8.4 5.6 Q11 4.6 14.4 5.8 M8.4 9.8 Q11 8.8 14.4 10" fill="none" stroke="#2f8fe4" stroke-width="1"/><path d="M10.6 3.4 h3 M10.6 7.6 h3 M10.6 11.8 h3" stroke="#0c2a66" stroke-width="1.5"/></symbol>
<symbol id="cab_y" viewBox="0 0 16 16"><path d="M0.8 2.6 Q0.8 1.6 1.8 1.4 L7.6 0.6 H8.4 L14.2 1.4 Q15.2 1.6 15.2 2.6 V13.4 Q15.2 14.4 14.2 14.6 L8.4 15.4 H7.6 L1.8 14.6 Q0.8 14.4 0.8 13.4 Z" fill="#e0a81c" stroke="#b8840e" stroke-width=".8"/><path d="M1.6 2.6 L7.4 1.6 V14.4 L1.6 13.4 Z" fill="url(#gCabYL)"/><path d="M8.4 1.6 L14.4 2.6 V13.4 L8.4 14.4 Z" fill="#fdf4b4"/><path d="M8.4 5.6 Q11 4.6 14.4 5.8 M8.4 9.8 Q11 8.8 14.4 10" fill="none" stroke="#d09a18" stroke-width="1"/><path d="M10.6 3.4 h3 M10.6 7.6 h3 M10.6 11.8 h3" stroke="#4a3206" stroke-width="1.5"/></symbol>
<symbol id="cab_cust" viewBox="0 0 16 16"><use href="#cab"/><circle cx="5" cy="7.6" r="2.4" fill="#f2b46a" stroke="#b97422" stroke-width=".6"/><path d="M1 15.2 Q1 10.6 5 10.6 Q9 10.6 9 15.2 Z" fill="#4cb43a" stroke="#2a8420" stroke-width=".6"/></symbol>
<symbol id="cab_emp" viewBox="0 0 16 16"><use href="#cab"/><rect x="0.8" y="7" width="8.4" height="8.2" fill="#fff" stroke="#3a6fd0" stroke-width=".9"/><rect x="2.2" y="9" width="3" height="3.4" fill="#e0a050"/><path d="M6 9.6 h2.4 M6 11.6 h2.4 M2.2 13.8 h6" stroke="#6a86c8" stroke-width=".8"/></symbol>
<symbol id="cab_proj" viewBox="0 0 16 16"><use href="#cab"/><rect x="0.6" y="8.4" width="9" height="7" rx="1" fill="#d8281c" stroke="#9a140c" stroke-width=".7"/><path d="M3.4 8.4 V7 H6.8 V8.4" fill="none" stroke="#9a140c" stroke-width="1"/><rect x="4.2" y="10.8" width="1.8" height="1.8" fill="#ffe9a0"/></symbol>
<symbol id="cab_stu" viewBox="0 0 16 16"><use href="#cab"/><rect x="0.8" y="5.6" width="8" height="3.4" fill="#e03a2a"/><circle cx="5" cy="12" r="3.6" fill="#f6c648" stroke="#c78a14" stroke-width=".7"/></symbol>
<symbol id="cab_ven" viewBox="0 0 16 16"><use href="#cab"/><path d="M0.8 15.2 V8.6 L2.8 6.4 L4.8 8.6 V15.2 Z M5.4 15.2 V8.6 L7.4 6.4 L9.4 8.6 V15.2 Z" fill="#fdf4e4" stroke="#b4641a" stroke-width=".9"/><path d="M2.8 10 v3 M7.4 10 v3" stroke="#b4641a" stroke-width=".9"/></symbol>
<symbol id="cab_vik" viewBox="0 0 16 16"><use href="#cab"/><circle cx="5" cy="12.6" r="4" fill="#fff" stroke="#e02020" stroke-width="1.2"/><path d="M5 10.4 V12.8 H7" fill="none" stroke="#222" stroke-width="1"/></symbol>

<!-- top tree icons -->
<symbol id="ws" viewBox="0 0 16 16"><path d="M0.6 15 Q0.6 9.6 6.4 9.6 Q12.2 9.6 12.2 15 Z" fill="#5a9ce0" stroke="#2f6fc0" stroke-width=".7"/><path d="M4.6 9.8 L6.4 12.6 L8.2 9.8 Z" fill="#fff"/><ellipse cx="6.6" cy="5.6" rx="3.1" ry="3.7" fill="#f1b98a" stroke="#b57a4a" stroke-width=".5"/><path d="M3.4 5 Q3.4 1.2 6.6 1.2 Q9.8 1.2 9.8 5 Q8.4 3.2 6.6 3.4 Q4.8 3.2 3.4 5 Z" fill="#5a3a22"/><path d="M7 15.4 L7.6 12.8 L13.6 7 L15.4 8.8 L9.6 14.8 Z" fill="#f4d23a" stroke="#8a6a10" stroke-width=".6"/><path d="M13 7.6 L13.6 7 L15.4 8.8 L14.8 9.4 Z" fill="#e84a5a"/><path d="M7 15.4 L7.4 13.6 L8.8 15 Z" fill="#222"/></symbol>
<symbol id="wf" viewBox="0 0 16 16"><path d="M0.6 4 H4.4" stroke="#1fae2e" stroke-width="1.5"/><path d="M3.4 1.2 L7 4 L3.4 6.8 Z" fill="#1fae2e"/><path d="M7.4 4 V13 H11.6 M7.4 4 H11.6" fill="none" stroke="#8a8a8a" stroke-width="1.3"/><path d="M11.2 1.2 L15.4 4 L11.2 6.8 Z" fill="#2a72e0"/><path d="M9.6 4 h2" stroke="#2a72e0" stroke-width="1.5"/><path d="M11.2 10.2 L15.4 13 L11.2 15.8 Z" fill="#d83048"/><path d="M9.6 13 h2" stroke="#d83048" stroke-width="1.5"/></symbol>
<symbol id="docs" viewBox="0 0 16 16"><path d="M1 1 H5.6 L7.6 3 V10 H1 Z" fill="#fff" stroke="#2d8a24" stroke-width="1.1"/><path d="M4 3.6 H8.6 L10.6 5.6 V12.6 H4 Z" fill="#fff" stroke="#2d8a24" stroke-width="1.1"/><path d="M7 6.4 H12 L15 9.4 V15.4 H7 Z" fill="#efefef" stroke="#2d8a24" stroke-width="1.2"/><path d="M12 6.4 V9.4 H15" fill="#fff" stroke="#2d8a24" stroke-width=".8"/></symbol>

<!-- toolbar icons -->
<symbol id="home" viewBox="0 0 16 16"><rect x="11.2" y="0.3" width="2.2" height="5.6" fill="#e8104a"/><path d="M1.9 8.4 V15.4 H13.5 V8.4 L7.7 2.6 Z" fill="#fffef2" stroke="#1a1a1a" stroke-width="1"/><path d="M0.7 8 L7.7 1 L14.7 8" fill="none" stroke="#1a1a1a" stroke-width="2.6" stroke-linejoin="miter"/><path d="M0.9 7.4 L7.7 0.7 L14.5 7.4" fill="none" stroke="#fadc3c" stroke-width="1.5"/><rect x="5.6" y="9.6" width="3.8" height="5.6" fill="#f8b010" stroke="#7a4a00" stroke-width=".7"/></symbol>
<symbol id="plus" viewBox="0 0 16 16"><path d="M5.8 0.9 H10.2 V5.8 H15.1 V10.2 H10.2 V15.1 H5.8 V10.2 H0.9 V5.8 H5.8 Z" fill="#98c926" stroke="#84b41e" stroke-width="1" stroke-linejoin="round"/><path d="M6.8 2 H9.2 V6.8 H14 V8 H2 V6.8 H6.8 Z" fill="#bfe068" opacity=".9"/><path d="M2 15.7 H14" stroke="#5a7a3a" stroke-opacity=".3" stroke-width=".8"/></symbol>
<symbol id="upa" viewBox="0 0 14 16"><path d="M7 0.8 L13.2 7.6 H9.6 V15 H4.4 V7.6 H0.8 Z" fill="url(#gGrn)" stroke="#1b9a06" stroke-width=".8" stroke-linejoin="round"/></symbol>
<symbol id="dna" viewBox="0 0 14 16"><path d="M7 15.2 L13.2 8.4 H9.6 V1 H4.4 V8.4 H0.8 Z" fill="url(#gGrn)" stroke="#1b9a06" stroke-width=".8" stroke-linejoin="round"/></symbol>
<symbol id="refresh" viewBox="0 0 16 16"><circle cx="8" cy="8" r="4.6" fill="#f4f9fd"/><path d="M1 8.6 A7 7 0 0 1 12.6 3 L14.6 1 L15.4 7.6 L8.8 6.8 L10.6 5 A4.2 4.2 0 0 0 4.2 8.6 Z" fill="#57addf" stroke="#2f88c4" stroke-width=".7" stroke-linejoin="round"/><path d="M15 7.4 A7 7 0 0 1 3.4 13 L1.4 15 L0.6 8.4 L7.2 9.2 L5.4 11 A4.2 4.2 0 0 0 11.8 7.4 Z" fill="#57addf" stroke="#2f88c4" stroke-width=".7" stroke-linejoin="round"/><path d="M2 7.6 A6 6 0 0 1 11.4 3.2" fill="none" stroke="#a6daf4" stroke-width="1.2"/><path d="M14 8.4 A6 6 0 0 1 4.6 12.8" fill="none" stroke="#a6daf4" stroke-width="1.2"/></symbol>
<symbol id="delx" viewBox="0 0 14 13"><path d="M0.6 1.8 Q2 0.4 3.4 1 Q7.6 4.6 13.4 12 Q11.6 12.8 10.6 12.2 Q6 6.2 0.6 1.8 Z" fill="#c8141c"/><path d="M13 0.4 Q8 3.6 3 12.4 Q1.4 12.8 0.8 11.8 Q5.6 3.4 11.6 0.2 Z" fill="#d8242a"/></symbol>
<symbol id="bin" viewBox="0 0 16 16"><path d="M2 5 H14 L13 15.4 H3 Z" fill="#f4f6f4" stroke="#b9c0b9" stroke-width=".7"/><rect x="0.6" y="1.6" width="14.8" height="4.2" rx="1.2" fill="#8dc21e" stroke="#6f9e12" stroke-width=".7"/><rect x="3" y="0.4" width="10" height="2" rx="1" fill="#a6d63a"/><path d="M8 7.4 L10.4 11 H9 M10.6 13.4 H6 L7 11.8 M5.4 12.6 L7.2 8.6 L8 9.8" fill="none" stroke="#4aa832" stroke-width="1.2"/></symbol>
<symbol id="tasks" viewBox="0 0 14 16"><rect x="0.8" y="1.8" width="12.4" height="13.6" rx="1.2" fill="#f8f8f4" stroke="#8a4a2a" stroke-width="1.3"/><rect x="4" y="0.4" width="6" height="3" rx="1" fill="#d6d6d6" stroke="#8a8a8a" stroke-width=".6"/><path d="M3 7 l1.4 1.4 L6.6 5.6 M3 11.4 l1.4 1.4 L6.6 10" fill="none" stroke="#2a9a1e" stroke-width="1.3"/><path d="M8 7.4 h3.4 M8 11.8 h3.4" stroke="#b4bcc8" stroke-width="1.1"/></symbol>
<symbol id="reports" viewBox="0 0 16 16"><rect x="0.8" y="0.8" width="11.6" height="14.4" fill="#fff" stroke="#9a9a9a" stroke-width="1"/><path d="M2.6 2.6 h8" stroke="#2ac84a" stroke-width="1.2"/><path d="M3.6 8.6 V6.2" stroke="#d83030" stroke-width="1.2"/><path d="M5.6 8.6 V4.8" stroke="#3a6ae0" stroke-width="1.2"/><path d="M7.6 8.6 V5.6" stroke="#b030c0" stroke-width="1.2"/><path d="M2.6 10.6 h7 M2.6 12.8 h5" stroke="#8a8a8a" stroke-width="1"/><path d="M5.4 14 L6.2 11.4 L12.8 4.6 L15 6.8 L8.2 13.4 Z" fill="#f6c81e" stroke="#7a5a0a" stroke-width=".6"/><path d="M12 5.4 L12.8 4.6 Q14.6 3.6 15.4 5 L15 6.8 L14.2 7.6 Z" fill="#e03a2a"/><path d="M5.4 14 L5.9 12.4 L7 13.5 Z" fill="#222"/></symbol>
<symbol id="gear" viewBox="0 0 16 16"><g transform="translate(8 8)"><g id="gt"><rect x="-1.7" y="-8" width="3.4" height="4" rx=".6"/></g><use href="#gt" transform="rotate(45)"/><use href="#gt" transform="rotate(90)"/><use href="#gt" transform="rotate(135)"/><use href="#gt" transform="rotate(180)"/><use href="#gt" transform="rotate(225)"/><use href="#gt" transform="rotate(270)"/><use href="#gt" transform="rotate(315)"/><circle r="5.6"/><circle r="4.6" fill="#fff" fill-opacity=".22"/><circle r="2.6" fill="#fff" stroke="#000" stroke-opacity=".18" stroke-width=".8"/></g></symbol>
<symbol id="wrench" viewBox="0 0 16 16"><path d="M5.4 4.8 L13.4 13.2" stroke="#6c747c" stroke-width="4.6" stroke-linecap="round"/><circle cx="4" cy="3.8" r="3.6" fill="#6c747c"/><path d="M5.4 4.8 L13.4 13.2" stroke="#e4e7ea" stroke-width="2.6" stroke-linecap="round"/><circle cx="4" cy="3.8" r="2.6" fill="#e4e7ea"/><path d="M3.8 4 L-0.6 1.6 L2 -1 Z" fill="#d3e4f6"/><path d="M0.4 2.6 L3.2 4.2 L1.8 0.2" fill="none" stroke="#80888f" stroke-width=".9"/></symbol>
<symbol id="help" viewBox="0 0 16 16"><circle cx="8" cy="8" r="7.6" fill="#fff" stroke="#9aa4b0" stroke-width=".8"/><circle cx="8" cy="8" r="6.2" fill="#2f86dc"/><path d="M1.9 7 A6.2 6.2 0 0 1 14.1 7 Q8 9.4 1.9 7 Z" fill="#5aa6ec"/><text x="8" y="12" text-anchor="middle" font-family="Liberation Sans, sans-serif" font-weight="bold" font-size="11" fill="#fff">?</text></symbol>
<symbol id="logout" viewBox="0 0 16 16"><path d="M9 1.2 H3 Q1.4 1.2 1.4 2.8 V13.2 Q1.4 14.8 3 14.8 H9 V12.6 H4 V3.4 H9 Z" fill="#4a8ae4" stroke="#1f5fb8" stroke-width=".8"/><path d="M4.6 3.8 H7.4 V12.2 H4.6 Z" fill="#dfeafa"/><path d="M6.2 6.4 H10.6 V3.8 L15.2 8 L10.6 12.2 V9.6 H6.2 Z" fill="#3b86e4" stroke="#1f5fb8" stroke-width=".7"/></symbol>
<symbol id="mag" viewBox="0 0 16 16"><path d="M9.4 8.8 L14.4 14.4" stroke="#d2402a" stroke-width="2.1" stroke-linecap="round"/><circle cx="6.4" cy="5.6" r="4.5" fill="url(#gLens)" stroke="#8e9cac" stroke-width="1.2"/></symbol>
<symbol id="magsave" viewBox="0 0 16 16"><path d="M0.8 6.4 H11.6 V15.2 H0.8 Z" fill="#3f78dc" stroke="#2a5cb8" stroke-width=".8"/><rect x="2.4" y="10.8" width="7" height="3.4" fill="#fff"/><path d="M3 13 h5.6" stroke="#111" stroke-width="1.1"/><circle cx="6.6" cy="5" r="4.3" fill="url(#gLens)" stroke="#8e9cac" stroke-width="1.2"/><path d="M4 4 h5.2 M4.2 6 h4.6" stroke="#6a86b4" stroke-width=".8"/><path d="M9.8 8.6 L14.2 14.6" stroke="#d2402a" stroke-width="2" stroke-linecap="round"/></symbol>
<symbol id="magplus" viewBox="0 0 16 16"><path d="M9.6 8.6 L14.4 13.8" stroke="#d4502a" stroke-width="2" stroke-linecap="round"/><circle cx="6.4" cy="5.6" r="4.6" fill="url(#gLens)" stroke="#7ba3c8" stroke-width="1.3"/><path d="M4.6 8.4 V15.6 M1 12 H8.2" stroke="#1e9a1a" stroke-width="2.2"/></symbol>
<symbol id="floppy" viewBox="0 0 16 16"><path d="M1 2.2 Q1 1 2.2 1 H12.6 L15 3.4 V13.8 Q15 15 13.8 15 H2.2 Q1 15 1 13.8 Z" fill="#3f7de0" stroke="#2a5fc0" stroke-width="1"/><rect x="3.6" y="1.4" width="8" height="4.6" fill="#e9eef8"/><rect x="5" y="2" width="1.6" height="3" fill="#2a3a6a"/><rect x="3" y="8.6" width="10" height="6" fill="#fff"/><path d="M4 10.6 h8 M4 12.6 h8" stroke="#7ec04a" stroke-width="1.4"/></symbol>

<!-- grid / panel icons -->
<symbol id="pdf" viewBox="0 0 14 16"><path d="M0.6 0.6 H9.4 L13.4 4.6 V15.4 H0.6 Z" fill="#fff" stroke="#8e8e8e" stroke-width="1"/><path d="M9.4 0.6 L13.4 4.6" fill="none" stroke="#b0b0b0" stroke-width=".8"/><rect x="0.2" y="11.6" width="13.6" height="4.2" fill="#e32a12"/><path d="M3 8.8 Q6.4 7.4 10.4 4.6 M8.8 3.4 Q7 7.2 4.6 10.6 M3.6 7.2 Q6.6 7.8 9.6 6.6" fill="none" stroke="#b82018" stroke-width=".8"/></symbol>
<symbol id="play" viewBox="0 0 6 8"><path d="M0.3 0.3 L5.7 4 L0.3 7.7 Z" fill="#1f9a12"/></symbol>
<symbol id="filt" viewBox="0 0 8 9"><ellipse cx="4" cy="1.8" rx="3.5" ry="1.6" fill="#555" /><ellipse cx="4" cy="1.5" rx="2.2" ry=".7" fill="#cfd3d8"/><path d="M0.6 2.2 L3.4 5.4 V8.8 H4.6 V5.4 L7.4 2.2 Z" fill="#444"/></symbol>
<symbol id="popout" viewBox="0 0 14 14"><rect x="0.7" y="0.7" width="12.6" height="12.6" fill="#fff" stroke="#5a5a5a" stroke-width="1.2"/><rect x="1.4" y="1.4" width="11.2" height="2" fill="#b9bdc2"/><path d="M1.4 7 H6.4 V12.6 M1.4 4.6 H6.4" fill="none" stroke="#5a5a5a" stroke-width="1.1"/><path d="M7 7.4 L11 3.4" fill="none" stroke="#333" stroke-width="1.1"/><path d="M8.6 2 H12.2 V5.8 Z" fill="#333"/></symbol>
<symbol id="dl" viewBox="0 0 14 14"><path d="M5 0.4 H9 V5.6 H12.4 L7 11 L1.6 5.6 H5 Z" fill="#555"/><rect x="0.4" y="12.4" width="13.2" height="1.4" fill="#555"/></symbol>
<symbol id="cls" viewBox="0 0 10 10"><path d="M0.6 0.6 L9.4 9.4 M9.4 0.6 L0.6 9.4" stroke="#636363" stroke-width="1.8"/></symbol>
<symbol id="star" viewBox="0 0 17 16"><path d="M8.5 0.9 L10.6 5.9 L16 6.3 L11.9 9.8 L13.2 15.1 L8.5 12.2 L3.8 15.1 L5.1 9.8 L1 6.3 L6.4 5.9 Z" fill="#f6f7f9" stroke="#8a8a8a" stroke-width=".9" stroke-linejoin="round"/></symbol>
<symbol id="info" viewBox="0 0 18 18"><circle cx="9" cy="9" r="8.4" fill="#d9dce0" stroke="#6e747c" stroke-width="1"/><path d="M1.6 7.4 A7.6 7.6 0 0 1 16.4 7.4 Q9 10.6 1.6 7.4 Z" fill="#eef0f2"/><text x="9.3" y="14" text-anchor="middle" font-family="Liberation Serif, serif" font-style="italic" font-weight="bold" font-size="14" fill="#3a3f46">i</text></symbol>
<symbol id="sticky" viewBox="0 0 16 17"><rect x="0.8" y="3" width="14.4" height="13.2" fill="#f6e27c" stroke="#cfae2a" stroke-width="1"/><path d="M1.4 13 H14.6 V15.6 H1.4 Z" fill="#f3d95a"/><path d="M7.4 3.8 L9.6 6" stroke="#777" stroke-width=".9"/><circle cx="6.4" cy="2.8" r="2.4" fill="#e0202a" stroke="#a8101a" stroke-width=".5"/></symbol>
<symbol id="tcheck" viewBox="0 0 17 16"><rect x="0.8" y="1.8" width="12.6" height="13.4" rx="1.6" fill="#f4f4f2" stroke="#b07418" stroke-width="1.3"/><path d="M1.6 10 H12.6 V14.4 H1.6 Z" fill="#dcdcda"/><path d="M3 0.6 v2.4 M5.6 0.6 v2.4 M8.2 0.6 v2.4 M10.8 0.6 v2.4" stroke="#8a5a14" stroke-width="1"/><path d="M5.4 7.6 L8.6 11 L15.8 3.8" fill="none" stroke="#5fb81e" stroke-width="2.4"/></symbol>
<symbol id="docprev" viewBox="0 0 17 18"><path d="M0.8 0.8 H8.6 L12.4 4.6 V16.6 H0.8 Z" fill="#f4f9fd" stroke="#4a9ad8" stroke-width="1.2"/><path d="M8.6 0.8 V4.6 H12.4 Z" fill="#4a9ad8"/><path d="M2.8 6.6 h5 M2.8 9 h4 M2.8 11.4 h4 M2.8 13.8 h5" stroke="#4a9ad8" stroke-width="1.1"/><circle cx="10.4" cy="10.6" r="3.6" fill="#eaf5fd" stroke="#4a9ad8" stroke-width="1.2"/><path d="M13 13.4 L16.4 16.8" stroke="#e0502a" stroke-width="1.8" stroke-linecap="round"/></symbol>
<symbol id="sign" viewBox="0 0 15 15"><path d="M0.6 6 L8.4 2.4 L12.8 10.6 L4.6 14.4 Z" fill="#fdfcf4" stroke="#5a4a22" stroke-width="1.1"/><path d="M5 9.6 Q7 8 8.8 8.8" fill="none" stroke="#2a5ad0" stroke-width="1"/><path d="M6 7.6 L8 5 L12.6 0.4 L13.8 1.4 L9.4 6.4 Z" fill="#333"/></symbol>
<symbol id="cal" viewBox="0 0 15 14"><rect x="0.8" y="1.6" width="13.4" height="11.6" rx="1" fill="#f2f3f5" stroke="#3a6af0" stroke-width="1.2"/><rect x="0.8" y="1.6" width="13.4" height="3" fill="#3a6af0"/><path d="M3.6 0.4 v2 M11.4 0.4 v2" stroke="#3a6af0" stroke-width="1.4"/><path d="M3 7 h9 M3 9 h9 M3 11 h9 M5 6 v6 M7.4 6 v6" stroke="#b8bcc4" stroke-width=".6"/><path d="M7.2 6.8 L11.4 11.4 M11.4 6.8 L7.2 11.4" stroke="#e02030" stroke-width="1.3"/></symbol>
<symbol id="edit" viewBox="0 0 15 10"><rect x="0.6" y="2.6" width="13.4" height="7" fill="#f2f2f2" stroke="#7a7a7a" stroke-width=".9"/><path d="M12 3.4 v5.4" stroke="#555" stroke-width=".8"/><path d="M2.6 8 L11.8 0.6" stroke="#c89a1a" stroke-width="1.5"/><path d="M2 8.6 L3.4 7.4" stroke="#333" stroke-width="1.2"/></symbol>
</defs>
</svg>
<!--ICONS-END-->
</body>
</html>
